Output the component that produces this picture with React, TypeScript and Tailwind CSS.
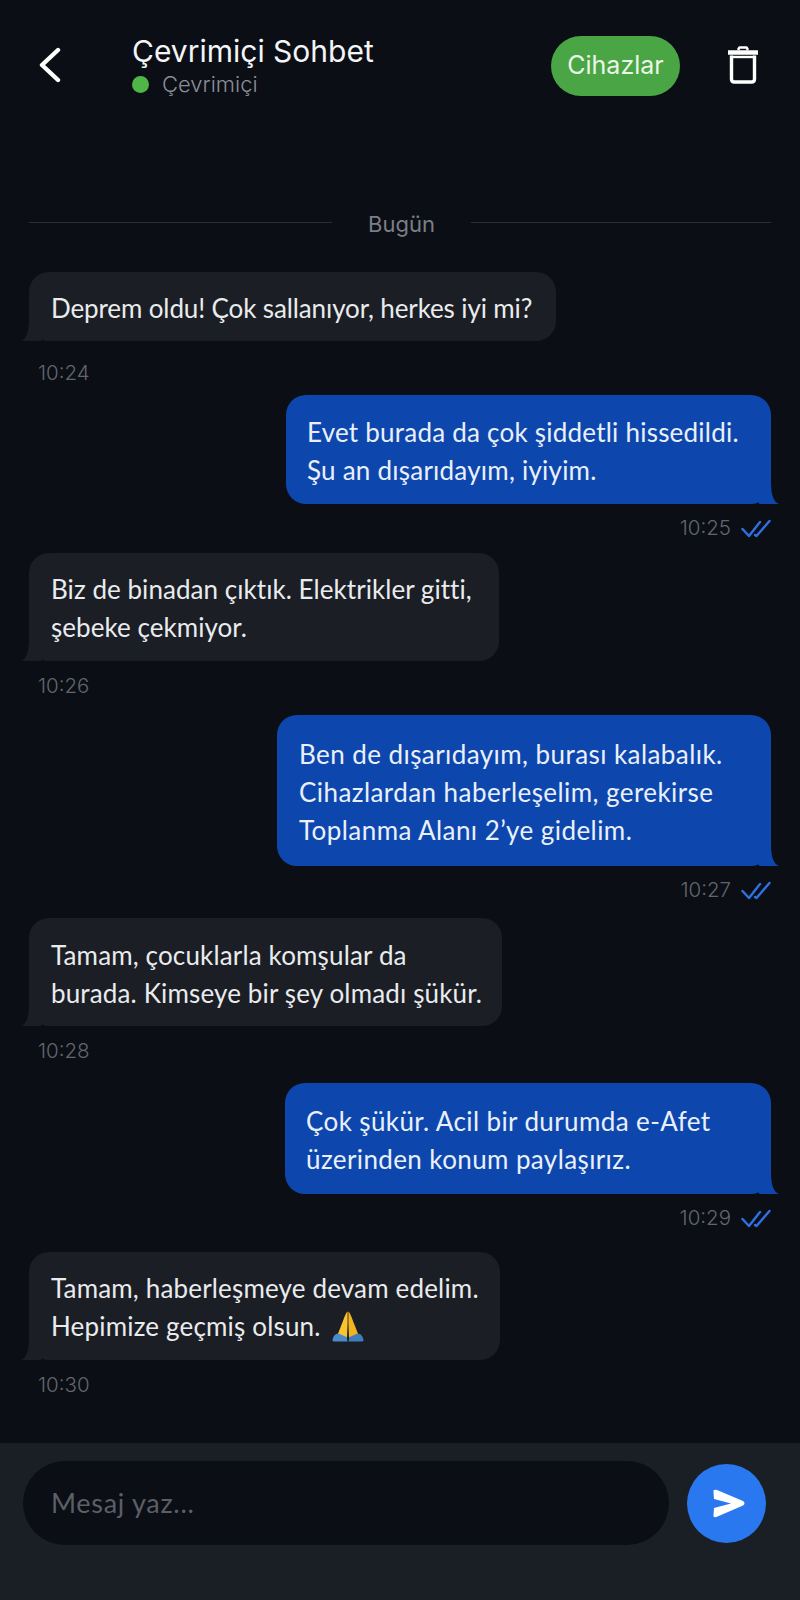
import React from "react";

const Tail = ({ side, color }: { side: "left" | "right"; color: string }) =>
  side === "left" ? (
    <svg className="absolute left-[-8px] bottom-0" width="20" height="22" viewBox="0 0 20 22">
      <path d="M8 0 L20 0 L20 22 L0 22 C5 20 8 14 8 0 Z" fill={color} />
    </svg>
  ) : (
    <svg className="absolute right-[-8px] bottom-0" width="20" height="22" viewBox="0 0 20 22">
      <path d="M12 0 L0 0 L0 22 L20 22 C15 20 12 14 12 0 Z" fill={color} />
    </svg>
  );

const Checks = () => (
  <svg width="30" height="19" viewBox="0 0 30 19" fill="none" stroke="#2f6fe0" strokeWidth="2.5" strokeLinecap="round" strokeLinejoin="round">
    <path d="M1.5 10 L8 17 L19 3" />
    <path d="M14 16 L15.5 17 L28.5 2" />
  </svg>
);

const Pray = () => (
  <svg className="inline-block ml-[5px] align-[-6px]" width="32" height="31" viewBox="0 0 32 31">
    <path d="M15.6 0.5 C13.5 2 11.5 9 9 15 L5.5 24 L15 27 L15.6 12 Z" fill="#f8c42f" />
    <path d="M16.4 0.5 C18.5 2 20.5 9 23 15 L26.5 24 L17 27 L16.4 12 Z" fill="#f2b41f" />
    <path d="M0.5 30 C0.5 26 3 22.5 6.5 22.5 L14.5 26 L15.5 30.5 L2 30.5 Z" fill="#4b8bc9" />
    <path d="M31.5 30 C31.5 26 29 22.5 25.5 22.5 L17.5 26 L16.5 30.5 L30 30.5 Z" fill="#3f7dbb" />
  </svg>
);

const bubbleText = "font-['Lato',sans-serif] text-[26px] leading-[38px] whitespace-nowrap";
const timeText = "text-[20.5px] leading-[24px] text-[#62666c] font-['Inter',sans-serif] font-light";

const Left = ({ cls, w, time, tw, children }: { cls: string; w: string; time: string; tw: string; children: React.ReactNode }) => (
  <div className={cls}>
    <div className={`relative ${w} bg-[#1b1e25] rounded-[20px] text-[#e9ebed] ${bubbleText}`}>
      <Tail side="left" color="#1b1e25" />
      <div className="relative">{children}</div>
    </div>
    <div className={`${tw} ml-[9px] ${timeText}`}>{time}</div>
  </div>
);

const Right = ({ cls, w, time, tw, children }: { cls: string; w: string; time: string; tw: string; children: React.ReactNode }) => (
  <div className={`${cls} flex flex-col items-end`}>
    <div className={`relative ${w} bg-[#0d47ae] rounded-[20px] text-[#eaf0fa] ${bubbleText}`}>
      <Tail side="right" color="#0d47ae" />
      <div className="relative">{children}</div>
    </div>
    <div className={`${tw} flex items-center gap-[10px] ${timeText}`}>
      <span>{time}</span>
      <Checks />
    </div>
  </div>
);

export default function App() {
  return (
    <div className="flex flex-col h-[1600px] w-[800px] bg-[#0b0e15] overflow-hidden font-['Inter',sans-serif]">
      <header className="flex items-start h-[200px] shrink-0">
        <svg className="mt-[47px] ml-[38px]" width="24" height="36" viewBox="0 0 24 36" fill="none" stroke="#ffffff" strokeWidth="4.4" strokeLinecap="round" strokeLinejoin="round">
          <path d="M20 3 L4 18 L20 33" />
        </svg>
        <div className="ml-[70px] mt-[32px]">
          <div className="text-[30px] leading-[38px] text-[#f4f5f6]">Çevrimiçi Sohbet</div>
          <div className="flex items-center gap-[13px] mt-[0px]">
            <span className="w-[17px] h-[17px] rounded-full bg-[#4fb648]" />
            <span className="text-[22px] leading-[28px] font-light text-[#8b8f95]">Çevrimiçi</span>
          </div>
        </div>
        <div className="ml-auto mt-[36px] w-[129px] h-[60px] rounded-full bg-[#4aa544] flex items-center justify-center text-[25px] text-[#eaf6e8]">Cihazlar</div>
        <svg className="mt-[46px] ml-[48px] mr-[42px]" width="30" height="38" viewBox="0 0 30 38" fill="none" stroke="#ffffff" strokeLinejoin="round">
          <path d="M0 6.5 H30" strokeWidth="4.5" />
          <path d="M10 4 L11.5 1.5 H18.5 L20 4" strokeWidth="2.5" />
          <path d="M3.5 9.5 V33 Q3.5 36 6.5 36 H23.5 Q26.5 36 26.5 33 V9.5" strokeWidth="3.4" />
          <path d="M3.5 11 H26.5" strokeWidth="2.4" />
        </svg>
      </header>

      <main className="flex-1 px-[29px]">
        <div className="flex items-center mt-[10px] h-[24px]">
          <div className="w-[303px] shrink-0 h-px bg-[#2a2e36]" />
          <div className="flex-1 text-center text-[22px] leading-[24px] text-[#7b7f85] pt-[3px]">Bugün</div>
          <div className="w-[300px] shrink-0 h-px bg-[#2a2e36]" />
        </div>

        <Left cls="mt-[38px]" w="w-[527px] h-[69px] px-[22px] py-[17px] tracking-[-0.12px]" time="10:24" tw="mt-[20px]">
          Deprem oldu! Çok sallanıyor, herkes iyi mi?
        </Left>
        <Right cls="mt-[10px]" w="w-[485px] h-[109px] px-[21px] py-[18px] tracking-[0.23px]" time="10:25" tw="mt-[12px]">
          Evet burada da çok şiddetli hissedildi.<br />Şu an dışarıdayım, iyiyim.
        </Right>
        <Left cls="mt-[13px]" w="w-[470px] h-[108px] px-[22px] py-[17px] tracking-[0.05px]" time="10:26" tw="mt-[13px]">
          Biz de binadan çıktık. Elektrikler gitti,<br />şebeke çekmiyor.
        </Left>
        <Right cls="mt-[17px]" w="w-[494px] h-[151px] px-[22px] py-[20px] tracking-[0.43px]" time="10:27" tw="mt-[12px]">
          Ben de dışarıdayım, burası kalabalık.<br />Cihazlardan haberleşelim, gerekirse<br />Toplanma Alanı 2’ye gidelim.
        </Right>
        <Left cls="mt-[16px]" w="w-[473px] h-[108px] px-[22px] py-[18px] tracking-[0.15px]" time="10:28" tw="mt-[13px]">
          Tamam, çocuklarla komşular da<br />burada. Kimseye bir şey olmadı şükür.
        </Left>
        <Right cls="mt-[20px]" w="w-[486px] h-[111px] px-[21px] py-[19px] tracking-[0.39px]" time="10:29" tw="mt-[12px]">
          Çok şükür. Acil bir durumda e-Afet<br />üzerinden konum paylaşırız.
        </Right>
        <Left cls="mt-[22px]" w="w-[471px] h-[108px] px-[22px] py-[17px] tracking-[0.17px]" time="10:30" tw="mt-[13px]">
          Tamam, haberleşmeye devam edelim.<br />Hepimize geçmiş olsun. <Pray />
        </Left>
      </main>

      <footer className="h-[157px] shrink-0 bg-[#1a1e25] flex items-start pl-[23px] pt-[18px]">
        <div className="w-[646px] h-[84px] rounded-full bg-[#0b0e15] flex items-center pl-[28px] font-['Lato',sans-serif] text-[27px] tracking-[0.7px] text-[#5b5f66]">Mesaj yaz...</div>
        <div className="ml-[18px] mt-[3px] w-[79px] h-[79px] rounded-full bg-[#2a78ef] flex items-center justify-center">
          <svg className="ml-[3px]" width="33" height="29" viewBox="0 0 33 29">
            <path d="M1.5 3 C1 1 2.5 0.3 5 1 L31 12 C33 13 33 15.5 31 16.5 L5 27.8 C2.5 28.6 1 28 1.5 26 L2 19 L19 14.5 L2 10 Z" fill="#ffffff" />
          </svg>
        </div>
      </footer>
    </div>
  );
}
